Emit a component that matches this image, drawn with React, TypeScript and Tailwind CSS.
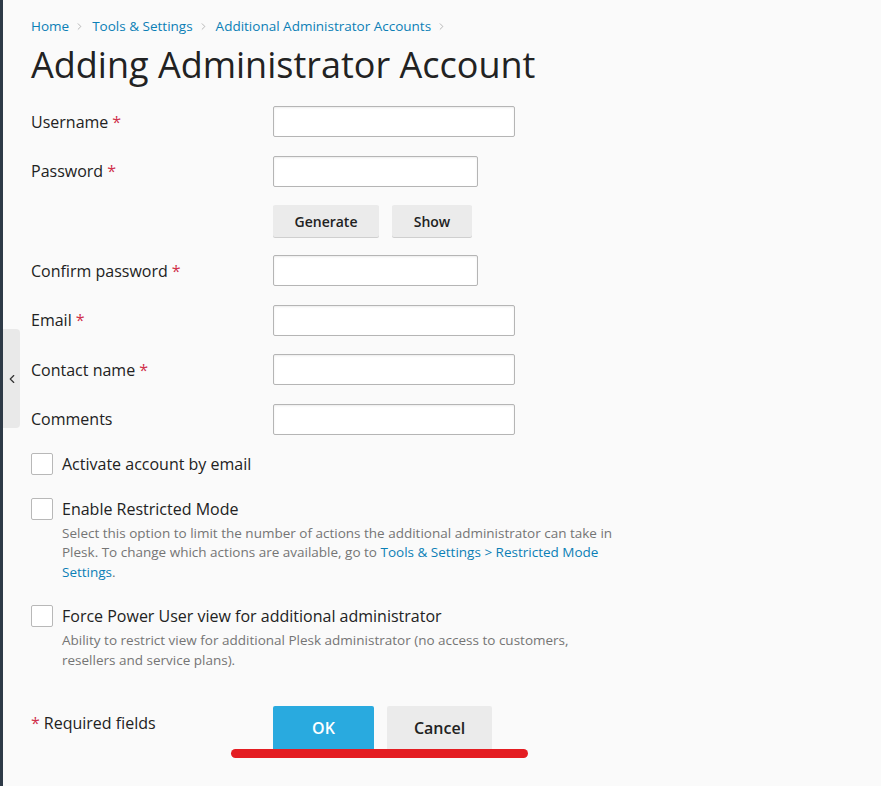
import { ChevronLeft, ChevronRight } from "lucide-react";

const font = { fontFamily: '"Open Sans", "Noto Sans", sans-serif' };

const crumbs = ["Home", "Tools & Settings", "Additional Administrator Accounts"];

const Req = () => <span className="text-[#d0304a] ml-1">*</span>;

const Field = ({ label, required, width }: { label: string; required?: boolean; width: string }) => (
  <div className="grid grid-cols-[242px_1fr] items-center h-[31px] mb-[18.5px]">
    <label className="text-[16px] text-[#222]">
      {label}
      {required && <Req />}
    </label>
    <input
      className={`${width} h-[31px] bg-white border border-[#b5b5b5] rounded-[2px] shadow-[inset_0_1px_2px_rgba(0,0,0,0.08)] outline-none`}
    />
  </div>
);

const Check = ({ label, children }: { label: string; children?: React.ReactNode }) => (
  <div className="flex flex-col">
    <div className="flex items-center h-[22px]">
      <span className="w-[22px] h-[22px] bg-white border border-[#b8b8b8] rounded-[2px] mr-[9px]" />
      <span className="text-[16px] text-[#222]">{label}</span>
    </div>
    {children && (
      <p className="ml-[31px] mt-[4px] w-[556px] text-[13.5px] leading-[19.5px] text-[#757575]">{children}</p>
    )}
  </div>
);

export default function App() {
  return (
    <div className="relative flex min-h-[786px] bg-[#fafafa]" style={font}>
      <div className="w-[3px] bg-[#2e3a47] shrink-0" />
      <button className="absolute left-[3px] top-[329px] w-[17px] h-[99px] bg-[#e9e9e9] rounded-r-[4px] flex items-center justify-center text-[#333]">
        <ChevronLeft size={14} strokeWidth={2} />
      </button>

      <main className="flex-1 pl-[28px] pt-[16px]">
        <nav className="flex items-center text-[13.5px] leading-[20px] text-[#0b7fb6]">
          {crumbs.map((c) => (
            <span key={c} className="flex items-center">
              <a>{c}</a>
              <ChevronRight size={11} className="ml-[5px] mr-[7px] text-[#999]" strokeWidth={1.5} />
            </span>
          ))}
        </nav>
        <h1 className="text-[36px] leading-[48px] text-[#222] mt-[5px] mb-[17px]">Adding Administrator Account</h1>

        <Field label="Username" required width="w-[242px]" />
        <Field label="Password" required width="w-[205px]" />
        <div className="grid grid-cols-[242px_1fr] mb-[18px]">
          <div />
          <div className="flex gap-[13px]">
            <button className="w-[106px] h-[32px] bg-[#ebebeb] rounded-[2px] shadow-[0_1px_0_#cfcfcf] text-[14px] font-semibold text-[#222]">
              Generate
            </button>
            <button className="w-[80px] h-[32px] bg-[#ebebeb] rounded-[2px] shadow-[0_1px_0_#cfcfcf] text-[14px] font-semibold text-[#222]">
              Show
            </button>
          </div>
        </div>
        <Field label="Confirm password" required width="w-[205px]" />
        <Field label="Email" required width="w-[242px]" />
        <Field label="Contact name" required width="w-[242px]" />
        <Field label="Comments" width="w-[242px]" />

        <div className="flex flex-col gap-[23px] -mt-[0.5px]">
          <Check label="Activate account by email" />
          <Check label="Enable Restricted Mode">
            Select this option to limit the number of actions the additional administrator can take in Plesk. To
            change which actions are available, go to{" "}
            <a className="text-[#0b7fb6]">Tools &amp; Settings &gt; Restricted Mode Settings</a>.
          </Check>
          <Check label="Force Power User view for additional administrator">
            Ability to restrict view for additional Plesk administrator (no access to customers, resellers and
            service plans).
          </Check>
        </div>

        <div className="grid grid-cols-[242px_1fr] mt-[36px]">
          <div className="text-[16px] text-[#222] pt-[5px]">
            <span className="text-[#d0304a] mr-1">*</span>Required fields
          </div>
          <div className="relative flex gap-[13px]">
            <button className="w-[101px] h-[43px] bg-[#29aadf] rounded-t-[2px] text-white text-[16px] font-semibold">
              OK
            </button>
            <button className="w-[105px] h-[43px] bg-[#ebebeb] rounded-t-[2px] text-[#222] text-[16px] font-semibold">
              Cancel
            </button>
            <span className="absolute left-[-42px] top-[43px] w-[297px] h-[9px] rounded-full bg-[#e41d22]" />
          </div>
        </div>
      </main>
    </div>
  );
}
